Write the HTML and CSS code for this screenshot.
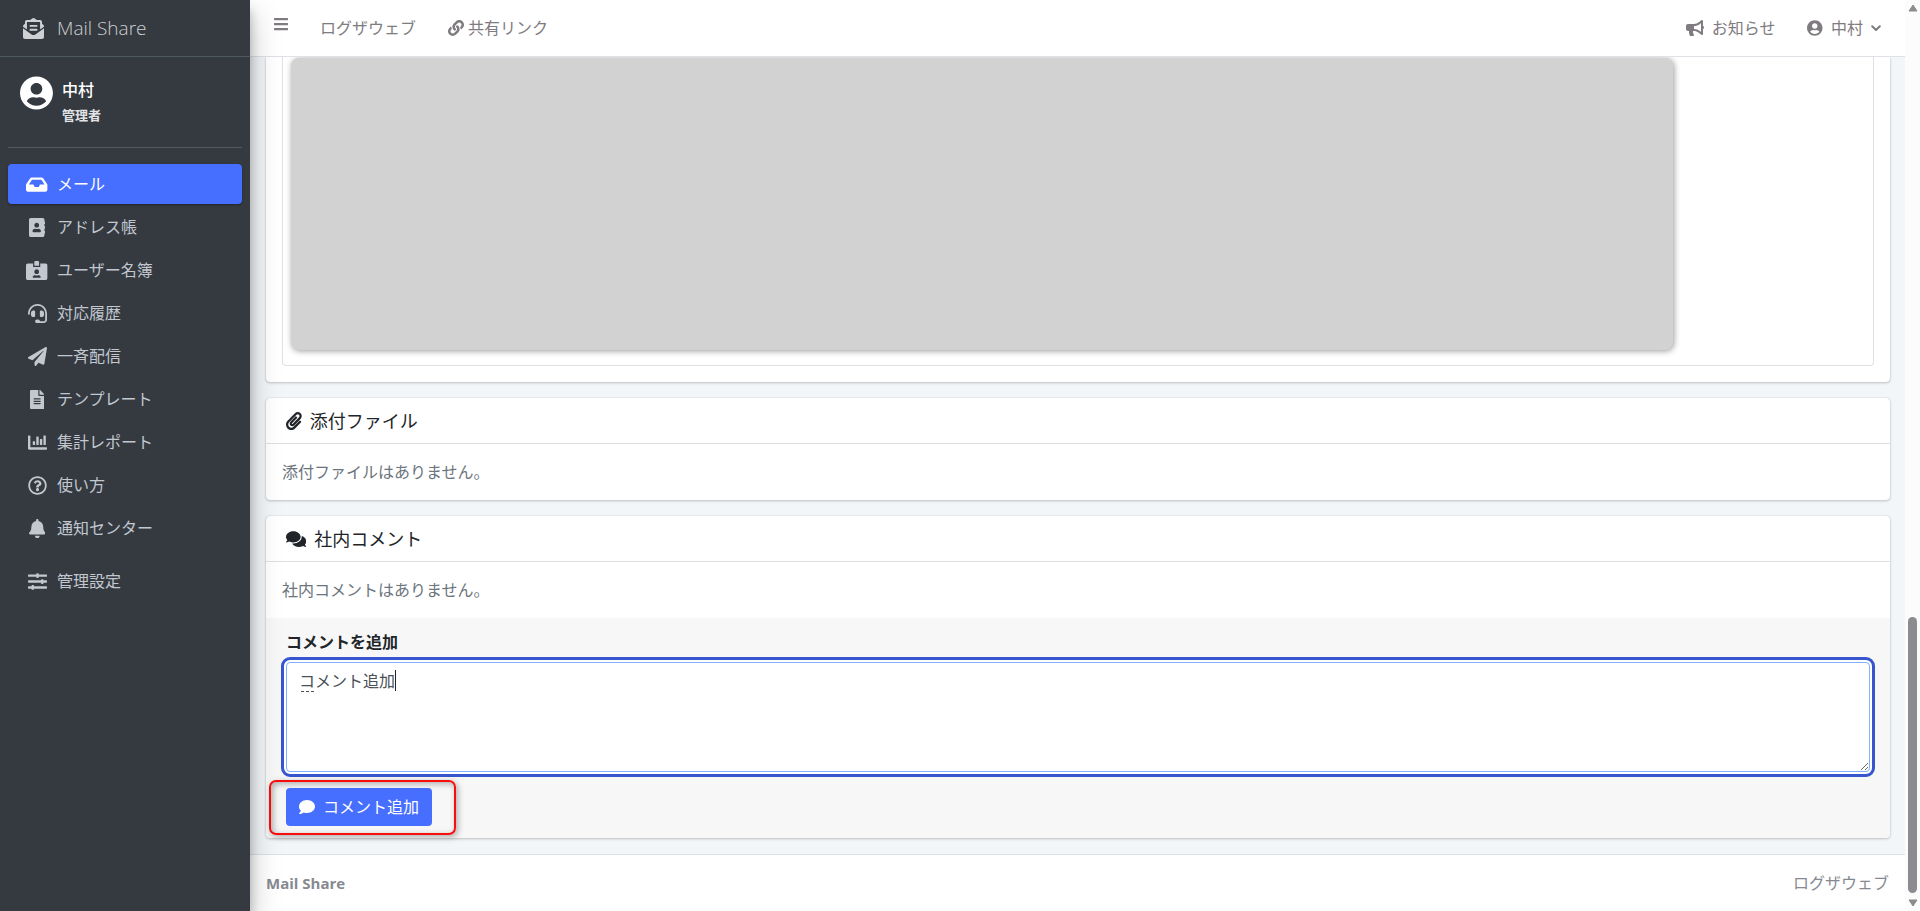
FILE: index.html
```html
<!DOCTYPE html>
<html lang="ja">
<head>
<meta charset="utf-8">
<meta name="viewport" content="width=device-width, initial-scale=1">
<title>Mail Share</title>
<link rel="stylesheet" href="styles.css">
</head>
<body>
<div class="app">
  <aside class="sidebar">
    <a class="brand" href="#">
      <svg class="icon icon-brand" viewBox="0 0 512 512" aria-hidden="true"><path d="M176 216h160c8.84 0 16-7.16 16-16v-16c0-8.84-7.16-16-16-16H176c-8.84 0-16 7.16-16 16v16c0 8.84 7.16 16 16 16zm-16 80c0 8.84 7.16 16 16 16h160c8.84 0 16-7.16 16-16v-16c0-8.84-7.16-16-16-16H176c-8.84 0-16 7.16-16 16v16zm96 121.13c-16.42 0-32.84-5.06-46.86-15.19L0 250.86V464c0 26.51 21.49 48 48 48h416c26.51 0 48-21.49 48-48V250.86L302.86 401.94c-14.02 10.12-30.44 15.19-46.86 15.19zm237.61-254.18c-8.85-6.94-17.24-13.47-29.61-22.81V96c0-26.51-21.49-48-48-48h-77.55c-3.04-2.2-5.87-4.26-9.04-6.56C312.6 29.17 279.2-.35 256 0c-23.2-.35-56.59 29.17-73.41 41.44-3.17 2.3-6 4.36-9.04 6.56H96c-26.51 0-48 21.49-48 48v44.14c-12.37 9.33-20.76 15.87-29.61 22.81A47.995 47.995 0 0 0 0 200.72v10.65l96 69.35V96h320v184.72l96-69.35v-10.65c0-14.74-6.78-28.67-18.39-37.77z"/></svg>
      <span>Mail Share</span>
    </a>
    <div class="user-panel">
      <svg class="icon icon-avatar" viewBox="0 0 496 512" aria-hidden="true"><path d="M248 8C111 8 0 119 0 256s111 248 248 248 248-111 248-248S385 8 248 8zm0 96c48.6 0 88 39.4 88 88s-39.4 88-88 88-88-39.4-88-88 39.4-88 88-88zm0 344c-58.7 0-111.3-26.6-146.5-68.2 18.8-35.4 55.6-59.8 98.5-59.8 2.4 0 4.8.4 7.1 1.1 13 4.2 26.6 6.9 40.9 6.9 14.3 0 28-2.7 40.9-6.9 2.3-.7 4.7-1.1 7.1-1.1 42.9 0 79.7 24.4 98.5 59.8C359.3 421.4 306.7 448 248 448z"/></svg>
      <div class="user-info">
        <a class="user-name" href="#">中村</a>
        <span class="user-role">管理者</span>
      </div>
    </div>
    <nav class="side-nav" aria-label="メインメニュー">
      <a class="side-link active" href="#"><span class="side-icon"><svg class="icon" viewBox="0 0 576 512" aria-hidden="true"><path d="M567.938 243.908L462.25 85.374A48.003 48.003 0 0 0 422.311 64H153.689a48 48 0 0 0-39.938 21.374L8.062 243.908A47.994 47.994 0 0 0 0 270.533V400c0 26.51 21.49 48 48 48h480c26.51 0 48-21.49 48-48V270.533a47.994 47.994 0 0 0-8.062-26.625zM162.252 128h251.497l85.333 128H376l-32 64H232l-32-64H76.918l85.334-128z"/></svg></span>メール</a>
      <a class="side-link" href="#"><span class="side-icon"><svg class="icon" viewBox="0 0 448 512" aria-hidden="true"><path d="M436 160c6.6 0 12-5.4 12-12v-40c0-6.6-5.4-12-12-12h-20V48c0-26.5-21.5-48-48-48H48C21.5 0 0 21.5 0 48v416c0 26.5 21.5 48 48 48h320c26.5 0 48-21.5 48-48v-48h20c6.6 0 12-5.4 12-12v-40c0-6.6-5.4-12-12-12h-20v-64h20c6.6 0 12-5.4 12-12v-40c0-6.6-5.4-12-12-12h-20v-64h20zm-228-32c35.3 0 64 28.7 64 64s-28.7 64-64 64-64-28.7-64-64 28.7-64 64-64zm112 236.8c0 10.6-10 19.2-22.4 19.2H118.4C106 384 96 375.4 96 364.8v-19.2c0-31.8 30.1-57.6 67.2-57.6h5c12.3 5.1 25.7 8 39.8 8s27.6-2.9 39.8-8h5c37.1 0 67.2 25.8 67.2 57.6v19.2z"/></svg></span>アドレス帳</a>
      <a class="side-link" href="#"><span class="side-icon"><svg class="icon" viewBox="0 0 576 512" aria-hidden="true"><path d="M528 64H384v96H192V64H48C21.5 64 0 85.5 0 112v352c0 26.5 21.5 48 48 48h480c26.5 0 48-21.5 48-48V112c0-26.5-21.5-48-48-48zM288 224c35.3 0 64 28.7 64 64s-28.7 64-64 64-64-28.7-64-64 28.7-64 64-64zm93.3 224H194.7c-10.4 0-18.8-10-15.6-19.8 8.3-25.6 32.4-44.2 60.9-44.2h8.2c12.3 5.1 25.7 8 39.8 8s27.6-2.9 39.8-8h8.2c28.4 0 52.5 18.5 60.9 44.2 3.2 9.9-5.2 19.8-15.6 19.8zM352 32c0-17.7-14.3-32-32-32h-64c-17.7 0-32 14.3-32 32v96h128V32z"/></svg></span>ユーザー名簿</a>
      <a class="side-link" href="#"><span class="side-icon"><svg class="icon" viewBox="0 0 512 512" aria-hidden="true"><path d="M192 208c0-17.67-14.33-32-32-32h-16c-35.35 0-64 28.65-64 64v48c0 35.35 28.65 64 64 64h16c17.67 0 32-14.33 32-32V208zm176 144c35.35 0 64-28.65 64-64v-48c0-35.35-28.65-64-64-64h-16c-17.67 0-32 14.33-32 32v112c0 17.67 14.33 32 32 32h16zM256 0C113.18 0 4.58 118.83 0 256v16c0 8.84 7.16 16 16 16h16c8.84 0 16-7.16 16-16v-16c0-114.69 93.31-208 208-208s208 93.31 208 208h-.12c.08 2.43.12 165.72.12 165.72 0 23.35-18.93 42.28-42.28 42.28H320c0-26.51-21.49-48-48-48h-32c-26.51 0-48 21.49-48 48s21.49 48 48 48h181.72c49.86 0 90.28-40.42 90.28-90.28V256C507.42 118.83 398.82 0 256 0z"/></svg></span>対応履歴</a>
      <a class="side-link" href="#"><span class="side-icon"><svg class="icon" viewBox="0 0 512 512" aria-hidden="true"><path d="M476 3.2L12.5 270.6c-18.1 10.4-15.8 35.6 2.2 43.2L121 358.4l287.3-253.2c5.5-4.9 13.3 2.6 8.6 8.3L176 407v80.5c0 23.6 28.5 32.9 42.5 15.8L282 426l124.6 52.2c14.2 6 30.4-2.9 33-18.2l72-432C515 7.8 493.3-6.8 476 3.2z"/></svg></span>一斉配信</a>
      <a class="side-link" href="#"><span class="side-icon"><svg class="icon" viewBox="0 0 384 512" aria-hidden="true"><path d="M224 136V0H24C10.7 0 0 10.7 0 24v464c0 13.3 10.7 24 24 24h336c13.3 0 24-10.7 24-24V160H248c-13.2 0-24-10.8-24-24zm64 236c0 6.6-5.4 12-12 12H108c-6.6 0-12-5.4-12-12v-8c0-6.6 5.4-12 12-12h168c6.6 0 12 5.4 12 12v8zm0-64c0 6.6-5.4 12-12 12H108c-6.6 0-12-5.4-12-12v-8c0-6.6 5.4-12 12-12h168c6.6 0 12 5.4 12 12v8zm0-72v8c0 6.6-5.4 12-12 12H108c-6.6 0-12-5.4-12-12v-8c0-6.6 5.4-12 12-12h168c6.6 0 12 5.4 12 12zm96-114.1v6.1H256V0h6.1c6.4 0 12.5 2.5 17 7l97.9 98c4.5 4.5 7 10.6 7 16.9z"/></svg></span>テンプレート</a>
      <a class="side-link" href="#"><span class="side-icon"><svg class="icon" viewBox="0 0 512 512" aria-hidden="true"><path d="M332.8 320h38.4c6.4 0 12.8-6.4 12.8-12.8V172.8c0-6.4-6.4-12.8-12.8-12.8h-38.4c-6.4 0-12.8 6.4-12.8 12.8v134.4c0 6.4 6.4 12.8 12.8 12.8zm96 0h38.4c6.4 0 12.8-6.4 12.8-12.8V76.8c0-6.4-6.4-12.8-12.8-12.8h-38.4c-6.4 0-12.8 6.4-12.8 12.8v230.4c0 6.4 6.4 12.8 12.8 12.8zm-288 0h38.4c6.4 0 12.8-6.4 12.8-12.8v-70.4c0-6.4-6.4-12.8-12.8-12.8h-38.4c-6.4 0-12.8 6.4-12.8 12.8v70.4c0 6.4 6.4 12.8 12.8 12.8zm96 0h38.4c6.4 0 12.8-6.4 12.8-12.8V108.8c0-6.4-6.4-12.8-12.8-12.8h-38.4c-6.4 0-12.8 6.4-12.8 12.8v198.4c0 6.4 6.4 12.8 12.8 12.8zM496 384H64V80c0-8.84-7.16-16-16-16H16C7.16 64 0 71.16 0 80v336c0 17.67 14.33 32 32 32h464c8.84 0 16-7.16 16-16v-32c0-8.84-7.16-16-16-16z"/></svg></span>集計レポート</a>
      <a class="side-link" href="#"><span class="side-icon"><svg class="icon" viewBox="0 0 512 512" aria-hidden="true"><path d="M256 8C119.043 8 8 119.083 8 256c0 136.997 111.043 248 248 248s248-111.003 248-248C504 119.083 392.957 8 256 8zm0 448c-110.532 0-200-89.431-200-200 0-110.495 89.472-200 200-200 110.491 0 200 89.471 200 200 0 110.53-89.431 200-200 200zm107.244-255.2c0 67.052-72.421 68.084-72.421 92.863V300c0 6.627-5.373 12-12 12h-45.647c-6.627 0-12-5.373-12-12v-8.659c0-35.745 27.1-50.034 47.579-61.516 17.561-9.845 28.324-16.541 28.324-29.579 0-17.246-21.999-28.693-39.784-28.693-23.189 0-33.894 10.977-48.942 29.969-4.057 5.12-11.46 6.071-16.666 2.124l-27.824-21.098c-5.107-3.872-6.251-11.066-2.644-16.363C184.846 131.491 214.94 112 261.794 112c49.071 0 101.45 38.304 101.45 88.8zM298 368c0 23.159-18.841 42-42 42s-42-18.841-42-42 18.841-42 42-42 42 18.841 42 42z"/></svg></span>使い方</a>
      <a class="side-link" href="#"><span class="side-icon"><svg class="icon" viewBox="0 0 448 512" aria-hidden="true"><path d="M224 512c35.32 0 63.97-28.65 63.97-64H160.03c0 35.35 28.65 64 63.97 64zm215.39-149.71c-19.32-20.76-55.47-51.99-55.47-154.29 0-77.7-54.48-139.9-127.94-155.16V32c0-17.67-14.32-32-31.98-32s-31.98 14.33-31.98 32v20.84C118.56 68.1 64.08 130.3 64.08 208c0 102.3-36.15 133.53-55.47 154.29-6 6.45-8.66 14.16-8.61 21.71.11 16.4 12.98 32 32.1 32h383.8c19.12 0 32-15.6 32.1-32 .05-7.55-2.61-15.27-8.61-21.71z"/></svg></span>通知センター</a>
      <a class="side-link side-link-admin" href="#"><span class="side-icon"><svg class="icon" viewBox="0 0 512 512" aria-hidden="true"><path d="M496 384H160v-16c0-8.8-7.2-16-16-16h-32c-8.8 0-16 7.2-16 16v16H16c-8.8 0-16 7.2-16 16v32c0 8.8 7.2 16 16 16h80v16c0 8.8 7.2 16 16 16h32c8.8 0 16-7.2 16-16v-16h336c8.8 0 16-7.2 16-16v-32c0-8.8-7.2-16-16-16zm0-160h-80v-16c0-8.8-7.2-16-16-16h-32c-8.8 0-16 7.2-16 16v16H16c-8.8 0-16 7.2-16 16v32c0 8.8 7.2 16 16 16h336v16c0 8.8 7.2 16 16 16h32c8.8 0 16-7.2 16-16v-16h80c8.8 0 16-7.2 16-16v-32c0-8.8-7.2-16-16-16zm0-160H288V48c0-8.8-7.2-16-16-16h-32c-8.8 0-16 7.2-16 16v16H16C7.2 64 0 71.2 0 80v32c0 8.8 7.2 16 16 16h208v16c0 8.8 7.2 16 16 16h32c8.8 0 16-7.2 16-16v-16h208c8.8 0 16-7.2 16-16V80c0-8.8-7.2-16-16-16z"/></svg></span>管理設定</a>
    </nav>
  </aside>

  <div class="page">
    <header class="topbar">
      <button class="menu-toggle" type="button" aria-label="メニュー">
        <svg class="icon icon-small" viewBox="0 0 448 512" aria-hidden="true"><path d="M16 132h416c8.837 0 16-7.163 16-16V76c0-8.837-7.163-16-16-16H16C7.163 60 0 67.163 0 76v40c0 8.837 7.163 16 16 16zm0 160h416c8.837 0 16-7.163 16-16v-40c0-8.837-7.163-16-16-16H16c-8.837 0-16 7.163-16 16v40c0 8.837 7.163 16 16 16zm0 160h416c8.837 0 16-7.163 16-16v-40c0-8.837-7.163-16-16-16H16c-8.837 0-16 7.163-16 16v40c0 8.837 7.163 16 16 16z"/></svg>
      </button>
      <a class="top-link" href="#">ログザウェブ</a>
      <a class="top-link top-link-tight" href="#"><svg class="icon icon-small" viewBox="0 0 512 512" aria-hidden="true"><path d="M326.612 185.391c59.747 59.809 58.927 155.698.36 214.59-.11.12-.24.25-.36.37l-67.2 67.2c-59.27 59.27-155.699 59.262-214.96 0-59.27-59.26-59.27-155.7 0-214.96l37.106-37.106c9.84-9.84 26.786-3.3 27.294 10.606.648 17.722 3.826 35.527 9.69 52.721 1.986 5.822.567 12.262-3.783 16.612l-13.087 13.087c-28.026 28.026-28.905 73.66-1.155 101.96 28.024 28.579 74.086 28.749 102.325.51l67.2-67.19c28.191-28.191 28.073-73.757 0-101.83-3.701-3.694-7.429-6.564-10.341-8.569a16.037 16.037 0 0 1-6.947-12.606c-.396-10.567 3.348-21.456 11.698-29.806l21.054-21.055c5.521-5.521 14.182-6.199 20.584-1.731a152.482 152.482 0 0 1 20.522 17.197zM467.547 44.449c-59.261-59.262-155.69-59.27-214.96 0l-67.2 67.2c-.12.12-.25.25-.36.37-58.566 58.892-59.387 154.781.36 214.59a152.454 152.454 0 0 0 20.521 17.196c6.402 4.468 15.064 3.789 20.584-1.731l21.054-21.055c8.35-8.35 12.094-19.239 11.698-29.806a16.037 16.037 0 0 0-6.947-12.606c-2.912-2.005-6.64-4.875-10.341-8.569-28.073-28.073-28.191-73.639 0-101.83l67.2-67.19c28.239-28.239 74.3-28.069 102.325.51 27.75 28.3 26.872 73.934-1.155 101.96l-13.087 13.087c-4.35 4.35-5.769 10.79-3.783 16.612 5.864 17.194 9.042 34.999 9.69 52.721.509 13.906 17.454 20.446 27.294 10.606l37.106-37.106c59.271-59.259 59.271-155.699.001-214.959z"/></svg>共有リンク</a>
      <div class="top-right">
        <a class="top-link" href="#"><svg class="icon icon-small" viewBox="0 0 576 512" aria-hidden="true"><path d="M576 240c0-23.63-12.95-44.04-32-55.12V32.01C544 23.26 537.02 0 512 0c-7.12 0-14.19 2.38-19.98 7.02l-85.03 68.03C364.28 109.19 310.66 128 256 128H64c-35.35 0-64 28.65-64 64v96c0 35.35 28.65 64 64 64h33.7c-1.39 10.48-2.18 21.14-2.18 32 0 39.77 9.26 77.35 25.56 110.94 5.19 10.69 16.52 17.06 28.4 17.06h74.28c26.05 0 41.69-29.84 25.9-50.56-16.4-21.52-26.15-48.36-26.15-77.44 0-11.11 1.62-21.79 4.41-32H256c54.66 0 108.28 18.81 150.98 52.95l85.03 68.03a32.023 32.023 0 0 0 19.98 7.02c24.92 0 32-22.78 32-32V295.13C563.05 284.04 576 263.63 576 240zm-96 141.42l-33.05-26.44C392.95 311.78 325.12 288 256 288v-96c69.12 0 136.95-23.78 190.95-66.98L480 98.58v282.84z"/></svg>お知らせ</a>
        <button class="top-link" type="button"><svg class="icon icon-small" viewBox="0 0 496 512" aria-hidden="true"><path d="M248 8C111 8 0 119 0 256s111 248 248 248 248-111 248-248S385 8 248 8zm0 96c48.6 0 88 39.4 88 88s-39.4 88-88 88-88-39.4-88-88 39.4-88 88-88zm0 344c-58.7 0-111.3-26.6-146.5-68.2 18.8-35.4 55.6-59.8 98.5-59.8 2.4 0 4.8.4 7.1 1.1 13 4.2 26.6 6.9 40.9 6.9 14.3 0 28-2.7 40.9-6.9 2.3-.7 4.7-1.1 7.1-1.1 42.9 0 79.7 24.4 98.5 59.8C359.3 421.4 306.7 448 248 448z"/></svg>中村<svg class="icon-chevron" viewBox="0 0 10 7" aria-hidden="true"><path d="M1.2 1.2 5 5l3.800-3.800"/></svg></button>
      </div>
    </header>

    <main class="content">
      <section class="card card-mail">
        <div class="mail-frame"><div class="mail-image"></div></div>
      </section>

      <section class="card">
        <h2 class="card-title"><svg class="icon icon-title" viewBox="0 0 448 512" aria-hidden="true"><path d="M43.246 466.142c-58.43-60.289-57.341-157.511 1.386-217.581L254.392 34c44.316-45.332 116.351-45.336 160.671 0 43.89 44.894 43.943 117.329 0 162.276L232.214 383.128c-29.855 30.537-78.633 30.111-107.982-.998-28.275-29.97-27.368-77.473 1.452-106.953l143.743-146.835c6.182-6.314 16.312-6.422 22.626-.241l22.861 22.379c6.315 6.182 6.422 16.312.241 22.626L171.427 319.927c-4.932 5.045-5.236 13.428-.648 18.292 4.372 4.634 11.245 4.711 15.688.165l182.849-186.851c19.613-20.062 19.613-52.725-.011-72.798-19.189-19.627-49.957-19.637-69.154 0L90.39 293.295c-34.763 35.56-35.299 93.12-1.191 128.313 34.01 35.093 88.985 35.137 123.058.286l172.06-175.999c6.177-6.319 16.307-6.433 22.626-.256l22.877 22.364c6.319 6.177 6.434 16.307.256 22.626l-172.06 175.998c-59.576 60.938-155.943 60.216-214.77-.485z"/></svg>添付ファイル</h2>
        <p class="card-body">添付ファイルはありません。</p>
      </section>

      <section class="card">
        <h2 class="card-title"><svg class="icon icon-title" viewBox="0 0 576 512" aria-hidden="true"><path d="M416 192c0-88.400-93.100-160-208-160S0 103.600 0 192c0 34.300 14.100 65.900 38 92-13.400 30.200-35.500 54.200-35.800 54.500-2.200 2.300-2.800 5.700-1.500 8.700S4.800 352 8 352c36.600 0 66.900-12.300 88.700-25 32.200 15.700 70.300 25 111.300 25 114.900 0 208-71.600 208-160zm122 220c23.900-26 38-57.700 38-92 0-66.900-53.500-124.200-129.300-148.100.9 6.600 1.300 13.300 1.300 20.100 0 105.900-107.700 192-240 192-10.800 0-21.300-.8-31.700-1.900C207.800 439.600 281.800 480 368 480c41 0 79.100-9.200 111.300-25 21.800 12.700 52.100 25 88.700 25 3.200 0 6.100-1.900 7.300-4.800 1.300-2.900.7-6.300-1.500-8.700-.3-.3-22.400-24.200-35.800-54.500z"/></svg>社内コメント</h2>
        <p class="card-body">社内コメントはありません。</p>
        <form class="comment-form">
          <label class="comment-label" for="comment">コメントを追加</label>
          <div class="comment-field">
            <textarea class="comment-input" id="comment" spellcheck="false">コメント追加</textarea>
            <span class="ime-mark"></span>
            <span class="caret"></span>
          </div>
          <div class="submit-wrap">
            <button class="submit" type="button"><svg class="icon icon-small" viewBox="0 0 512 512" aria-hidden="true"><path d="M256 32C114.600 32 0 125.100 0 240c0 49.600 21.400 95 57 130.700C44.500 421.100 2.700 466 2.200 466.500c-2.200 2.300-2.800 5.700-1.500 8.700S4.800 480 8 480c66.300 0 116-31.800 140.600-51.400 32.700 12.300 69 19.400 107.400 19.400 141.400 0 256-93.100 256-208S397.400 32 256 32z"/></svg>コメント追加</button>
            <span class="highlight"></span>
          </div>
        </form>
      </section>
    </main>

    <footer class="footer">
      <strong class="footer-name">Mail Share</strong>
      <span>ログザウェブ</span>
    </footer>
  </div>

  <div class="scrollbar" aria-hidden="true">
    <svg class="scroll-arrow" viewBox="0 0 10 8"><path d="M5 1 9 7H1z"/></svg>
    <div class="scroll-track"><div class="scroll-thumb"></div></div>
    <svg class="scroll-arrow" viewBox="0 0 10 8"><path d="M5 7 1 1h8z"/></svg>
  </div>
</div>
</body>
</html>
```

FILE: styles.css
```css
*,
*::before,
*::after {
  box-sizing: border-box;
}

body {
  margin: 0;
  background: #f3f6f9;
  color: #212529;
  font-family: "Open Sans", "Noto Sans CJK JP", sans-serif;
  font-size: 16px;
  line-height: 24px;
}

a {
  color: inherit;
  text-decoration: none;
}

button {
  margin: 0;
  padding: 0;
  border: 0;
  background: none;
  color: inherit;
  font: inherit;
  cursor: pointer;
}

.icon {
  display: block;
  flex: none;
  width: auto;
  height: 19px;
  fill: currentColor;
}

.icon-small {
  height: 16px;
}

.icon-title {
  height: 18px;
}

.icon-brand {
  height: 21px;
}

.icon-avatar {
  height: 34px;
}

.app {
  display: flex;
  min-height: 100vh;
}

/* Sidebar */

.sidebar {
  position: relative;
  z-index: 2;
  flex: none;
  width: 250px;
  background: #343a40;
  color: #c2c7d0;
  box-shadow: 0 14px 28px rgba(0, 0, 0, 0.25), 0 10px 10px rgba(0, 0, 0, 0.22);
}

.brand {
  display: flex;
  align-items: center;
  gap: 13px;
  height: 57px;
  padding-left: 23px;
  border-bottom: 1px solid #4f5962;
  color: #cfd0d3;
  font-size: 19px;
  font-weight: 300;
}

.user-panel {
  display: flex;
  gap: 9px;
  margin: 0 8px 16px;
  padding: 19px 0 20px 12px;
  border-bottom: 1px solid #4f5962;
  color: #fff;
}

.user-info {
  display: flex;
  flex-direction: column;
  padding-top: 2px;
  font-weight: 500;
}

.user-role {
  padding-top: 1px;
  color: #e2e3e6;
  font-size: 13px;
  font-weight: 700;
}

.side-nav {
  display: flex;
  flex-direction: column;
  gap: 3px;
  padding: 0 8px;
}

.side-link {
  display: flex;
  align-items: center;
  gap: 7px;
  padding: 8px 16px;
  border-radius: 4px;
}

.side-link.active {
  background: #466eff;
  color: #fff;
  box-shadow: 0 1px 3px rgba(0, 0, 0, 0.12), 0 1px 2px rgba(0, 0, 0, 0.24);
}

.side-link-admin {
  margin-top: 10px;
}

.side-icon {
  display: flex;
  justify-content: center;
  width: 26px;
}

/* Page */

.page {
  display: flex;
  flex: 1;
  flex-direction: column;
  min-width: 0;
}

.topbar {
  position: relative;
  z-index: 1;
  display: flex;
  align-items: center;
  height: 57px;
  padding: 0 8px;
  border-bottom: 1px solid #dee2e6;
  background: #fff;
  color: #807b80;
}

.menu-toggle {
  display: flex;
  padding: 0 16px 8px;
}

.top-link {
  display: flex;
  align-items: center;
  gap: 8px;
  padding: 8px 16px;
}

.top-link-tight {
  gap: 4px;
}

.top-right {
  display: flex;
  margin-left: auto;
}

.icon-chevron {
  width: 10px;
  height: 7px;
  fill: none;
  stroke: currentColor;
  stroke-linecap: round;
  stroke-linejoin: round;
  stroke-width: 2;
}

.content {
  display: flex;
  flex: 1;
  flex-direction: column;
  gap: 16px;
  padding: 0 15px 16px 16px;
}

.card {
  border-radius: 4px;
  background: #fff;
  box-shadow: 0 0 1px rgba(0, 0, 0, 0.25), 0 1px 3px rgba(0, 0, 0, 0.2);
}

.card-mail {
  padding: 0 16px 16px;
  border-radius: 0 0 4px 4px;
}

.mail-frame {
  padding: 1px 8px 15px;
  border: 1px solid #dee2e6;
  border-top: 0;
  border-radius: 0 0 4px 4px;
}

.mail-image {
  width: 1382px;
  max-width: 100%;
  height: 292px;
  border-radius: 8px;
  background: #d2d2d2;
  box-shadow: 1px 1px 6px rgba(0, 0, 0, 0.4);
}

.card-title {
  display: flex;
  align-items: center;
  gap: 8px;
  margin: 0;
  padding: 11px 20px 10px;
  border-bottom: 1px solid #dfdfdf;
  font-size: 18px;
  font-weight: 400;
}

.card-body {
  margin: 0;
  padding: 16px;
  color: #6c757d;
}

.comment-form {
  padding: 12px 20px;
  border-radius: 0 0 4px 4px;
  background: #f7f7f7;
}

.comment-label {
  display: block;
  margin-bottom: 8px;
  font-weight: 700;
}

.comment-field {
  position: relative;
  margin-bottom: 16px;
}

.comment-input {
  display: block;
  width: 100%;
  height: 110px;
  padding: 6px 12px;
  border: 1px solid #80b0ff;
  border-radius: 4px;
  outline: 3px solid #3755cf;
  outline-offset: 2px;
  background: #fff;
  box-shadow: 0 0 0 2px #fff;
  color: #495057;
  font: inherit;
  resize: vertical;
}

/* Text cursor and the dashed mark left by the input method */
.caret {
  position: absolute;
  top: 8px;
  left: 109px;
  width: 1px;
  height: 21px;
  background: #212529;
}

.ime-mark {
  position: absolute;
  top: 29px;
  left: 15px;
  width: 13px;
  border-top: 1px dashed #495057;
}

.submit-wrap {
  position: relative;
  width: fit-content;
}

.submit {
  display: flex;
  align-items: center;
  gap: 8px;
  padding: 7px 13px;
  border-radius: 4px;
  background: #466eff;
  color: #fff;
}

.highlight {
  position: absolute;
  inset: -8px -24px -9px -17px;
  border: 2px solid #f80d0d;
  border-radius: 7px;
  box-shadow: 2px 2px 6px rgba(0, 0, 0, 0.3), inset 2px 2px 6px rgba(0, 0, 0, 0.3);
  pointer-events: none;
}

.footer {
  display: flex;
  align-items: center;
  justify-content: space-between;
  padding: 16px;
  border-top: 1px solid #dee2e6;
  background: #fff;
  color: #868a90;
}

.footer-name {
  font-size: 15px;
  font-weight: 700;
}

/* Scroll bar */

.scrollbar {
  position: sticky;
  top: 0;
  display: flex;
  flex: none;
  flex-direction: column;
  align-items: center;
  gap: 6px;
  width: 15px;
  height: 100vh;
  padding: 4px 0;
  background: #fcfcfc;
}

.scroll-arrow {
  width: 10px;
  height: 8px;
  fill: #8b8b90;
  stroke: #8b8b90;
  stroke-linejoin: round;
}

.scroll-track {
  display: flex;
  flex: 1;
  flex-direction: column;
  justify-content: flex-end;
}

.scroll-thumb {
  width: 9px;
  height: 276px;
  border-radius: 5px;
  background: #8b8b90;
}
```
